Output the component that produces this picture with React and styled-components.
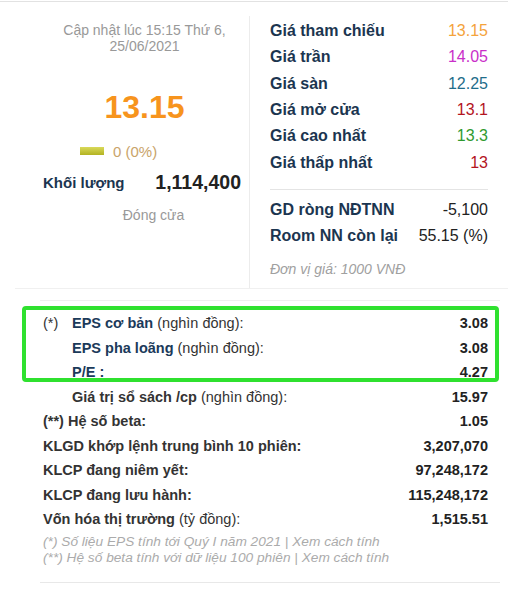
import React from 'react';
import styled, {createGlobalStyle} from 'styled-components';

const GlobalStyle = createGlobalStyle`
  body {
    margin: 0;
    background: #fff;
    font-family: 'Liberation Sans', Arial, sans-serif;
  }
`;

const Page = styled.div`
  width: 508px;
  height: 594px;
  border-top: 1px solid #e2e2e2;
  margin-top: 1px;
  box-sizing: border-box;
  overflow: hidden;
`;

const Top = styled.div`
  display: flex;
  margin: 14px 0 0 15px;
  border-bottom: 1px solid #f0f0f0;
`;

const LeftPanel = styled.div`
  width: 235px;
  height: 272px;
  box-sizing: border-box;
  padding: 6px 0 0 25px;
  border-right: 1px solid #ececec;
  display: flex;
  flex-direction: column;
`;

const Updated = styled.div`
  color: #999;
  font-size: 14px;
  line-height: 16px;
  text-align: center;
`;

const Price = styled.div`
  margin-top: 35px;
  color: #f7941d;
  font-size: 32px;
  font-weight: bold;
  line-height: 36px;
  text-align: center;
`;

const ChangeRow = styled.div`
  display: flex;
  align-items: center;
  gap: 9px;
  margin: 17px 0 0 40px;
  height: 18px;
`;

const ChangeBar = styled.span`
  width: 24px;
  height: 8px;
  background: linear-gradient(#d9d95a, #b3b322);
`;

const ChangeText = styled.span`
  color: #c9a46a;
  font-size: 15px;
`;

const VolumeRow = styled.div`
  display: flex;
  justify-content: space-between;
  align-items: center;
  margin-top: 9px;
  padding: 0 8px 0 3px;
  height: 26px;
`;

const VolumeLabel = styled.span`
  color: #1b3550;
  font-size: 15px;
  font-weight: bold;
`;

const VolumeValue = styled.span`
  color: #222;
  font-size: 19.5px;
  font-weight: bold;
`;

const Closed = styled.div`
  margin-top: 12px;
  padding-left: 18px;
  color: #999;
  font-size: 14px;
  text-align: center;
`;

const RightPanel = styled.div`
  flex: 1;
  padding: 2px 20px 0 20px;
`;

const PriceRow = styled.div`
  display: flex;
  justify-content: space-between;
  align-items: center;
  height: 26.3px;
  font-size: 16px;
`;

const PriceLabel = styled.span`
  color: #1b3550;
  font-weight: bold;
`;

const PriceValue = styled.span`
  color: ${p => p.$color || '#222'};
`;

const Divider = styled.div`
  height: 1px;
  background: #e4e4e4;
  margin: 13px 0 7px;
`;

const Unit = styled.div`
  margin-top: 12px;
  color: #a0a0a0;
  font-size: 14px;
  font-style: italic;
  line-height: 16px;
`;

const Bottom = styled.div`
  position: relative;
  margin: 11px 8px 0 40px;
  padding: 10px 12px 16px 3px;
  border-top: 1px solid #efefef;
  border-bottom: 1px solid #e8e8e8;
`;

const StatRow = styled.div`
  display: flex;
  align-items: center;
  height: 24.5px;
  font-size: 14.5px;
  color: #333;
`;

const Prefix = styled.span`
  width: 29px;
  flex: none;
`;

const StatLabel = styled.span`
  flex: 1;
  b {
    color: ${p => (p.$blue ? '#1b3a5a' : '#333')};
  }
`;

const StatValue = styled.span`
  font-weight: bold;
  color: #222;
`;

const Notes = styled.div`
  margin-top: 2px;
  color: #ababab;
  font-size: 13.7px;
  font-style: italic;
  line-height: 16px;
`;

const Highlight = styled.div`
  position: absolute;
  left: -18px;
  top: 5px;
  width: 477px;
  height: 76px;
  box-sizing: border-box;
  border: 4px solid #2fe12f;
  border-radius: 4px;
  pointer-events: none;
`;

const prices = [
  ['Giá tham chiếu', '13.15', '#f4a33c'],
  ['Giá trần', '14.05', '#c92fc9'],
  ['Giá sàn', '12.25', '#1f6d8a'],
  ['Giá mở cửa', '13.1', '#b3141e'],
  ['Giá cao nhất', '13.3', '#2f9a2f'],
  ['Giá thấp nhất', '13', '#b3141e'],
];

const stats = [
  {prefix: '(*)', bold: 'EPS cơ bản', rest: ' (nghìn đồng):', value: '3.08', blue: true},
  {prefix: '', bold: 'EPS pha loãng', rest: ' (nghìn đồng):', value: '3.08', blue: true},
  {prefix: '', bold: 'P/E :', rest: '', value: '4.27', blue: true},
  {prefix: '', bold: 'Giá trị sổ sách /cp', rest: ' (nghìn đồng):', value: '15.97'},
  {bold: '(**) Hệ số beta:', rest: '', value: '1.05'},
  {bold: 'KLGD khớp lệnh trung bình 10 phiên:', rest: '', value: '3,207,070'},
  {bold: 'KLCP đang niêm yết:', rest: '', value: '97,248,172'},
  {bold: 'KLCP đang lưu hành:', rest: '', value: '115,248,172'},
  {bold: 'Vốn hóa thị trường', rest: ' (tỷ đồng):', value: '1,515.51'},
];

const App = () => (
  <Page>
    <GlobalStyle />
    <Top>
      <LeftPanel>
        <Updated>Cập nhật lúc 15:15 Thứ 6,<br />25/06/2021</Updated>
        <Price>13.15</Price>
        <ChangeRow>
          <ChangeBar />
          <ChangeText>0 (0%)</ChangeText>
        </ChangeRow>
        <VolumeRow>
          <VolumeLabel>Khối lượng</VolumeLabel>
          <VolumeValue>1,114,400</VolumeValue>
        </VolumeRow>
        <Closed>Đóng cửa</Closed>
      </LeftPanel>
      <RightPanel>
        {prices.map(([label, value, color]) => (
          <PriceRow key={label}>
            <PriceLabel>{label}</PriceLabel>
            <PriceValue $color={color}>{value}</PriceValue>
          </PriceRow>
        ))}
        <Divider />
        <PriceRow>
          <PriceLabel>GD ròng NĐTNN</PriceLabel>
          <PriceValue>-5,100</PriceValue>
        </PriceRow>
        <PriceRow>
          <PriceLabel>Room NN còn lại</PriceLabel>
          <PriceValue>55.15 (%)</PriceValue>
        </PriceRow>
        <Unit>Đơn vị giá: 1000 VNĐ</Unit>
      </RightPanel>
    </Top>
    <Bottom>
      {stats.map(s => (
        <StatRow key={s.bold}>
          {s.prefix !== undefined && <Prefix>{s.prefix}</Prefix>}
          <StatLabel $blue={s.blue}>
            <b>{s.bold}</b>{s.rest}
          </StatLabel>
          <StatValue>{s.value}</StatValue>
        </StatRow>
      ))}
      <Notes>
        (*) Số liệu EPS tính tới Quý I năm 2021 | Xem cách tính<br />
        (**) Hệ số beta tính với dữ liệu 100 phiên | Xem cách tính
      </Notes>
      <Highlight />
    </Bottom>
  </Page>
);

export default App;
